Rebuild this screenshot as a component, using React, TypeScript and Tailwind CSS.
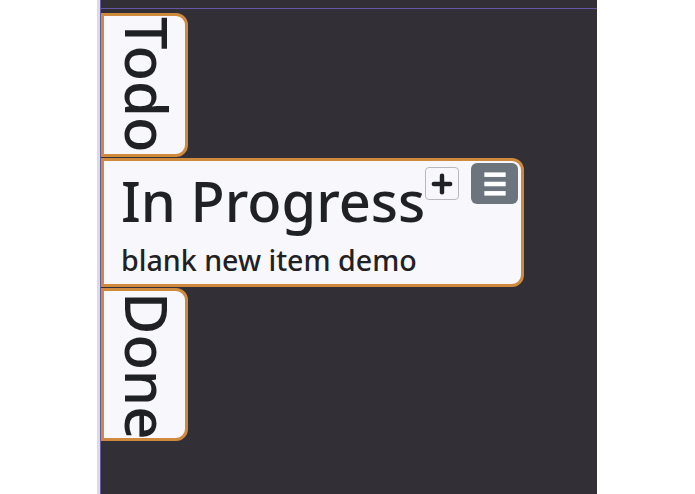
import { Menu, Plus } from 'lucide-react';

function CollapsedLane({ title, height }: { title: string; height: string }) {
  return (
    <section
      className={`flex w-[87px] items-start rounded-r-[12px] border-[3px] border-[#d08a3e] bg-[#f8f8fc] pl-[17px] pt-[1px] ${height}`}
    >
      <h2 className="text-[58px] font-medium leading-[52px] text-[#1f2125] [writing-mode:vertical-rl]">{title}</h2>
    </section>
  );
}

export default function App() {
  return (
    <div className="min-h-screen bg-white font-['Noto_Sans',sans-serif]">
      <div className="ml-[97px] flex h-[494px] w-[500px] border-l-[3px] border-[#dcdae2]">
        <div className="flex flex-1 flex-col border-l border-[#6656a6] bg-[#332f37]">
          <div className="h-[8px] shrink-0" />
          <div className="h-px shrink-0 bg-[#6656a6]" />
          <div className="flex flex-col items-start gap-px pt-[4px]">
            <CollapsedLane title="Todo" height="h-[144px]" />

            <section className="flex w-[423px] items-start justify-between rounded-r-[12px] border-[3px] border-[#d08a3e] bg-[#f8f8fc] pb-[4px] pl-[17px] pr-[3px] pt-[2px]">
              <div className="pt-[3px]">
                <div className="flex items-start">
                  <h2 className="text-[56px] font-medium leading-[68px] text-[#1f2125]">In Progress</h2>
                  <button className="mt-[1px] flex h-[33px] w-[34px] items-center justify-center rounded-[4px] border border-[#b8b8be] bg-[#f8f8fc]">
                    <Plus size={28} strokeWidth={3.8} className="text-[#1f2125]" />
                  </button>
                </div>
                <p className="mt-[6px] text-[28.6px] font-medium leading-[40px] text-[#1f2125]">blank new item demo</p>
              </div>
              <button className="flex h-[41px] w-[47px] items-center justify-center rounded-[6px] bg-[#6c757d]">
                <Menu size={32} strokeWidth={3.4} strokeLinecap="butt" className="text-white" />
              </button>
            </section>

            <CollapsedLane title="Done" height="h-[153px]" />
          </div>
        </div>
      </div>
    </div>
  );
}
